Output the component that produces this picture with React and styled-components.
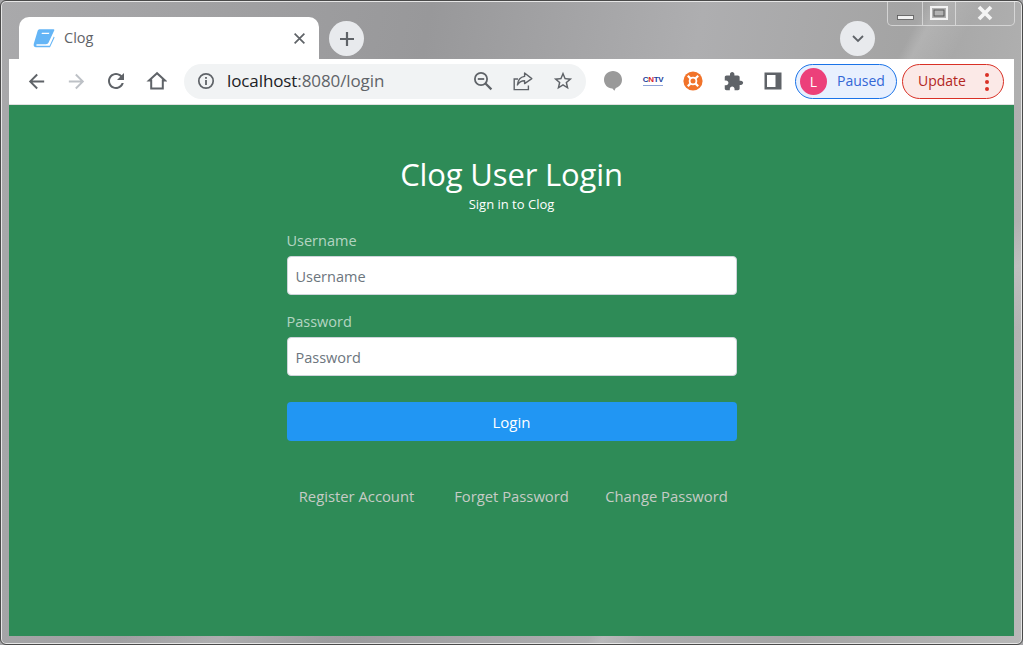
import React from 'react';
import styled, { createGlobalStyle } from 'styled-components';

const GlobalStyle = createGlobalStyle`
  html, body {
    margin: 0;
    padding: 0;
    overflow: hidden;
    background: #a5a5a7;
  }
  * { box-sizing: border-box; }
`;

const Window = styled.div`
  position: relative;
  width: 1023px;
  height: 645px;
  display: flex;
  flex-direction: column;
  padding: 0 8px 8px;
  font-family: "Open Sans", "Noto Sans", sans-serif;
  border: 1px solid #4a4a4a;
  border-radius: 6px;
  box-shadow: inset 0 0 0 1px #e6e6e6;
  background:
    linear-gradient(118deg, transparent 68%, rgba(255,255,255,.14) 69%, transparent 72%),
    linear-gradient(155deg, transparent 62%, rgba(255,255,255,.18) 66%, transparent 72%),
    linear-gradient(100deg, #a9a9ab 0%, #98989a 38%, #aeaeb0 62%, #a4a4a4 80%, #b8b8b8 100%);
`;

const TabStrip = styled.div`
  height: 58px;
  margin: 0 -1px;
  padding: 16px 0 0 11px;
  display: flex;
  align-items: flex-start;
`;

const Tab = styled.div`
  width: 300px;
  height: 42px;
  background: #fff;
  border-radius: 10px 10px 0 0;
  display: flex;
  align-items: center;
  padding: 0 13px 0 14px;
  position: relative;
`;

const TabTitle = styled.span`
  margin: 0 0 2px 9px;
  font-size: 14.5px;
  color: #5f6368;
  flex: 1;
`;

const RoundButton = styled.div`
  width: 35px;
  height: 35px;
  border-radius: 50%;
  background: #e8eaed;
  display: flex;
  align-items: center;
  justify-content: center;
  flex-shrink: 0;
  margin-top: 4px;
  margin-left: ${p => p.$left || 0}px;
`;

const CaptionGroup = styled.div`
  position: absolute;
  top: 0;
  right: 7px;
  width: 128px;
  height: 25px;
  display: flex;
  border: 1px solid rgba(235,235,235,.65);
  border-top: none;
  border-radius: 0 0 5px 5px;
`;

const CaptionButton = styled.div`
  width: ${p => p.$w}px;
  display: flex;
  align-items: center;
  justify-content: center;
  border-right: ${p => (p.$last ? 'none' : '1px solid rgba(235,235,235,.65)')};
`;

const Toolbar = styled.div`
  height: 46px;
  flex-shrink: 0;
  background: #fff;
  border-bottom: 1px solid #e0e0e0;
  display: flex;
  align-items: flex-start;
  padding: 5px 10px 0 7px;
`;

const NavIcon = styled.div`
  width: 40px;
  height: 35px;
  display: flex;
  align-items: center;
  justify-content: center;
  flex-shrink: 0;
  padding-bottom: 1px;
`;

const Omnibox = styled.div`
  width: 402px;
  height: 35px;
  margin-left: 8px;
  border-radius: 18px;
  background: #f1f3f4;
  display: flex;
  align-items: center;
  padding: 0 3px 0 2px;
  flex-shrink: 0;
`;

const UrlText = styled.div`
  flex: 1;
  font-size: 17px;
  letter-spacing: -0.1px;
  color: #202124;
  margin: 0 0 2px 1px;

  span { color: #5f6368; }
`;

const ExtArea = styled.div`
  display: flex;
  margin-left: 7px;
`;

const CntvLogo = styled.div`
  font-size: 8px;
  line-height: 8px;
  font-weight: 800;
  font-family: "Liberation Sans", sans-serif;
  color: #1b3f9c;
  border-bottom: 1px solid #8fa4d8;
  padding-bottom: 1px;
  letter-spacing: -0.3px;

  b { color: #d8262c; }
`;

const ProfilePill = styled.div`
  width: 102px;
  height: 35px;
  margin-left: 2px;
  border: 1.5px solid #1a73e8;
  border-radius: 18px;
  background: #e8f0fe;
  display: flex;
  align-items: center;
  padding-left: 4px;
  flex-shrink: 0;
`;

const Avatar = styled.div`
  width: 27px;
  height: 27px;
  border-radius: 50%;
  background: #ec407a;
  color: #fff;
  font-size: 14px;
  display: flex;
  align-items: center;
  justify-content: center;
`;

const PausedText = styled.span`
  margin: 0 0 2px 10px;
  font-size: 14px;
  color: #3367d6;
`;

const UpdatePill = styled.div`
  width: 102px;
  height: 35px;
  margin-left: 5px;
  border: 1.5px solid #d93025;
  border-radius: 18px;
  background: #fbe9e7;
  display: flex;
  align-items: center;
  padding: 0 14px 0 15px;
  justify-content: space-between;
  flex-shrink: 0;
`;

const UpdateText = styled.span`
  margin-bottom: 2px;
  font-size: 14px;
  color: #b3261e;
`;

const Dots = styled.div`
  display: flex;
  flex-direction: column;
  gap: 3px;

  i {
    display: block;
    width: 4px;
    height: 4px;
    border-radius: 50%;
    background: #d93025;
  }
`;

const Page = styled.main`
  flex: 1;
  background: #2e8b57;
  display: flex;
  flex-direction: column;
  align-items: center;
  padding-top: 47px;
`;

const Title = styled.h1`
  margin: 0;
  font-size: 31px;
  line-height: 44px;
  font-weight: 400;
  color: #fff;
  letter-spacing: -0.15px;
`;

const Subtitle = styled.div`
  font-size: 13px;
  line-height: 16px;
  color: #fff;
`;

const Form = styled.form`
  width: 450px;
  margin-top: 18px;
  display: flex;
  flex-direction: column;
`;

const Field = styled.div`
  margin-bottom: 16px;
`;

const Label = styled.label`
  display: block;
  font-size: 14.5px;
  line-height: 22px;
  margin-bottom: 4px;
  color: rgba(255,255,255,.65);
`;

const Input = styled.input`
  display: block;
  width: 100%;
  height: 39px;
  padding: 2px 8px 0;
  border: 1px solid #ced4da;
  border-radius: 4px;
  background: #fff;
  font-family: inherit;
  font-size: 14.5px;
  outline: none;

  &::placeholder {
    color: #6c757d;
    opacity: 1;
  }
`;

const LoginButton = styled.button`
  height: 39px;
  margin-top: 10px;
  border: none;
  border-radius: 4px;
  background: #2196f3;
  color: #fff;
  font-family: inherit;
  font-size: 15px;
`;

const Links = styled.div`
  margin-top: 44px;
  display: grid;
  grid-template-columns: repeat(3, 155px);
  justify-content: center;
  text-align: center;
`;

const FooterLink = styled.a`
  font-size: 14.8px;
  line-height: 22px;
  color: #c6cbc6;
  text-decoration: none;
`;

const Icon = ({ d, size = 24, fill = '#5f6368' }) => (
  <svg width={size} height={size} viewBox="0 0 24 24" fill={fill}>
    <path d={d} />
  </svg>
);

const BACK = 'M20 11H7.83l5.59-5.59L12 4l-8 8 8 8 1.41-1.41L7.83 13H20v-2z';
const FORWARD = 'M4 11h12.17l-5.59-5.59L12 4l8 8-8 8-1.41-1.41L16.17 13H4v-2z';
const RELOAD = 'M17.65 6.35C16.2 4.9 14.21 4 12 4c-4.42 0-7.99 3.58-7.99 8s3.57 8 7.99 8c3.73 0 6.84-2.55 7.73-6h-2.08c-.82 2.33-3.04 4-5.65 4-3.31 0-6-2.69-6-6s2.69-6 6-6c1.66 0 3.14.69 4.22 1.78L13 11h7V4l-2.35 2.35z';
const STAR = 'M22 9.24l-7.19-.62L12 2 9.19 8.63 2 9.24l5.46 4.73L5.82 21 12 17.27 18.18 21l-1.63-7.03L22 9.24zM12 15.4l-3.76 2.27 1-4.28-3.32-2.88 4.38-.38L12 6.1l1.71 4.04 4.38.38-3.32 2.88 1 4.28L12 15.4z';
const PUZZLE = 'M20.5 11H19V7c0-1.1-.9-2-2-2h-4V3.5C13 2.12 11.88 1 10.5 1S8 2.12 8 3.5V5H4c-1.1 0-1.99.9-1.99 2v3.8H3.5c1.49 0 2.7 1.21 2.7 2.7s-1.21 2.7-2.7 2.7H2V20c0 1.1.9 2 2 2h3.8v-1.5c0-1.49 1.21-2.7 2.7-2.7 1.49 0 2.7 1.21 2.7 2.7V22H17c1.1 0 2-.9 2-2v-4h1.5c1.38 0 2.5-1.12 2.5-2.5S21.88 11 20.5 11z';

const BookIcon = () => (
  <svg width="22" height="20" viewBox="0 0 22 20">
    <path d="M6.5 1.2 H20.6 C21.3 1.2 21.6 2 21.2 2.6 L15.6 14.6 C15 15.8 14.2 16.3 13 16.3 H4 C3 16.3 2.9 17.8 4 17.8 H16.6 L20.8 8.6 L21.6 9.6 L17 19.2 H3 C1.2 19.2 0.2 17.8 0.8 15.8 L4.6 3 C5 1.9 5.6 1.2 6.5 1.2 Z" fill="#64b5f6" />
    <path d="M9 4.8 H16.4 L15.9 6 H8.5 Z" fill="#fff" />
  </svg>
);

const HomeIcon = () => (
  <svg width="22" height="22" viewBox="0 0 22 22" fill="none" stroke="#5f6368" strokeWidth="2">
    <path d="M12 3.2 L4 10.6 H6.2 V18.6 H17.8 V10.6 H20 Z" strokeLinejoin="miter" />
  </svg>
);

const InfoIcon = () => (
  <svg width="18" height="18" viewBox="0 0 18 18">
    <circle cx="9" cy="9" r="7.2" fill="none" stroke="#5f6368" strokeWidth="1.7" />
    <rect x="8.1" y="8" width="1.8" height="5" fill="#5f6368" />
    <rect x="8.1" y="5" width="1.8" height="1.8" fill="#5f6368" />
  </svg>
);

const ZoomOutIcon = () => (
  <svg width="20" height="20" viewBox="0 0 20 20" fill="none" stroke="#5f6368" strokeWidth="1.8">
    <circle cx="8" cy="8" r="6.1" />
    <path d="M12.5 12.5 L18.4 18.4" strokeWidth="2.2" />
    <path d="M4.8 8 H11.2" />
  </svg>
);

const ShareIcon = () => (
  <svg width="20" height="20" viewBox="0 0 20 20" fill="none" stroke="#5f6368" strokeWidth="1.4">
    <path d="M5 8 H1.2 V18.6 H15.4 V14.5" />
    <path d="M11.6 2 L18.8 7.6 L11.6 12.6 V9.8 C8.4 9.8 6 11 4.4 14 C4.8 9.6 7.4 6 11.6 5.4 Z" strokeLinejoin="round" />
  </svg>
);

const ChatBubble = () => (
  <svg width="20" height="22" viewBox="0 0 20 22">
    <path d="M10 1 C15 1 19 4.8 19 9.8 C19 14 16.4 16.8 12.8 18 L11.4 20.8 L9.4 18.6 C4.6 18.4 1 14.6 1 9.8 C1 4.8 5 1 10 1 Z" fill="#9a9a9a" />
  </svg>
);

const OrangeBadge = () => (
  <svg width="20" height="20" viewBox="0 0 20 20">
    <circle cx="10" cy="10" r="9.6" fill="#f1732a" />
    <circle cx="10" cy="10" r="3.4" fill="none" stroke="#fff" strokeWidth="1.8" />
    <path d="M4.8 4.8 L7.4 7.4 M15.2 4.8 L12.6 7.4 M4.8 15.2 L7.4 12.6 M15.2 15.2 L12.6 12.6" stroke="#fff" strokeWidth="2.2" />
  </svg>
);

const SidePanelIcon = () => (
  <svg width="18" height="18" viewBox="0 0 18 18">
    <path d="M0.5 0.5 H17.5 V17.5 H0.5 Z M3 3 V15 H11.5 V3 Z" fill="#5f6368" fillRule="evenodd" />
  </svg>
);

const Cross = ({ size, color, width }) => (
  <svg width={size} height={size} viewBox="0 0 12 12" stroke={color} strokeWidth={width} fill="none">
    <path d="M1.5 1.5 L10.5 10.5 M10.5 1.5 L1.5 10.5" />
  </svg>
);

const App = () => {
  return (
    <Window>
      <GlobalStyle />
      <TabStrip>
        <Tab>
          <BookIcon />
          <TabTitle>Clog</TabTitle>
          <Cross size={13} color="#5f6368" width={1.6} />
        </Tab>
        <RoundButton $left={10}>
          <svg width="18" height="18" viewBox="0 0 18 18" stroke="#5f6368" strokeWidth="2.2">
            <path d="M9 2 V16 M2 9 H16" />
          </svg>
        </RoundButton>
        <RoundButton $left={476}>
          <svg width="12" height="8" viewBox="0 0 12 8" stroke="#5f6368" strokeWidth="1.8" fill="none">
            <path d="M1 1 L6 6 L11 1" />
          </svg>
        </RoundButton>
      </TabStrip>

      <CaptionGroup>
        <CaptionButton $w={36}>
          <svg width="17" height="14" viewBox="0 0 17 14">
            <rect x="0.5" y="9.5" width="16" height="4" fill="#f2f2f2" stroke="#555" strokeWidth="0.8" />
          </svg>
        </CaptionButton>
        <CaptionButton $w={33}>
          <svg width="18" height="14" viewBox="0 0 18 14" fill="none">
            <rect x="1" y="1" width="16" height="12" stroke="#f2f2f2" strokeWidth="2" />
            <rect x="4" y="4" width="10" height="6" stroke="#555" strokeWidth="1" />
          </svg>
        </CaptionButton>
        <CaptionButton $w={59} $last>
          <Cross size={16} color="#f4f4f4" width={2.8} />
        </CaptionButton>
      </CaptionGroup>

      <Toolbar>
        <NavIcon><Icon d={BACK} size={23} /></NavIcon>
        <NavIcon><Icon d={FORWARD} size={23} fill="#bdc1c6" /></NavIcon>
        <NavIcon><Icon d={RELOAD} size={24} /></NavIcon>
        <NavIcon><HomeIcon /></NavIcon>
        <Omnibox>
          <NavIcon><InfoIcon /></NavIcon>
          <UrlText>localhost<span>:8080/login</span></UrlText>
          <NavIcon><ZoomOutIcon /></NavIcon>
          <NavIcon><ShareIcon /></NavIcon>
          <NavIcon><Icon d={STAR} size={22} /></NavIcon>
        </Omnibox>
        <ExtArea>
          <NavIcon><ChatBubble /></NavIcon>
          <NavIcon><CntvLogo>C<b>N</b>TV</CntvLogo></NavIcon>
          <NavIcon><OrangeBadge /></NavIcon>
          <NavIcon><Icon d={PUZZLE} size={21} /></NavIcon>
          <NavIcon><SidePanelIcon /></NavIcon>
        </ExtArea>
        <ProfilePill>
          <Avatar>L</Avatar>
          <PausedText>Paused</PausedText>
        </ProfilePill>
        <UpdatePill>
          <UpdateText>Update</UpdateText>
          <Dots><i /><i /><i /></Dots>
        </UpdatePill>
      </Toolbar>

      <Page>
        <Title>Clog User Login</Title>
        <Subtitle>Sign in to Clog</Subtitle>
        <Form onSubmit={e => e.preventDefault()}>
          <Field>
            <Label>Username</Label>
            <Input placeholder="Username" />
          </Field>
          <Field>
            <Label>Password</Label>
            <Input placeholder="Password" type="text" />
          </Field>
          <LoginButton>Login</LoginButton>
          <Links>
            <FooterLink href="#">Register Account</FooterLink>
            <FooterLink href="#">Forget Password</FooterLink>
            <FooterLink href="#">Change Password</FooterLink>
          </Links>
        </Form>
      </Page>
    </Window>
  );
};

export default App;
